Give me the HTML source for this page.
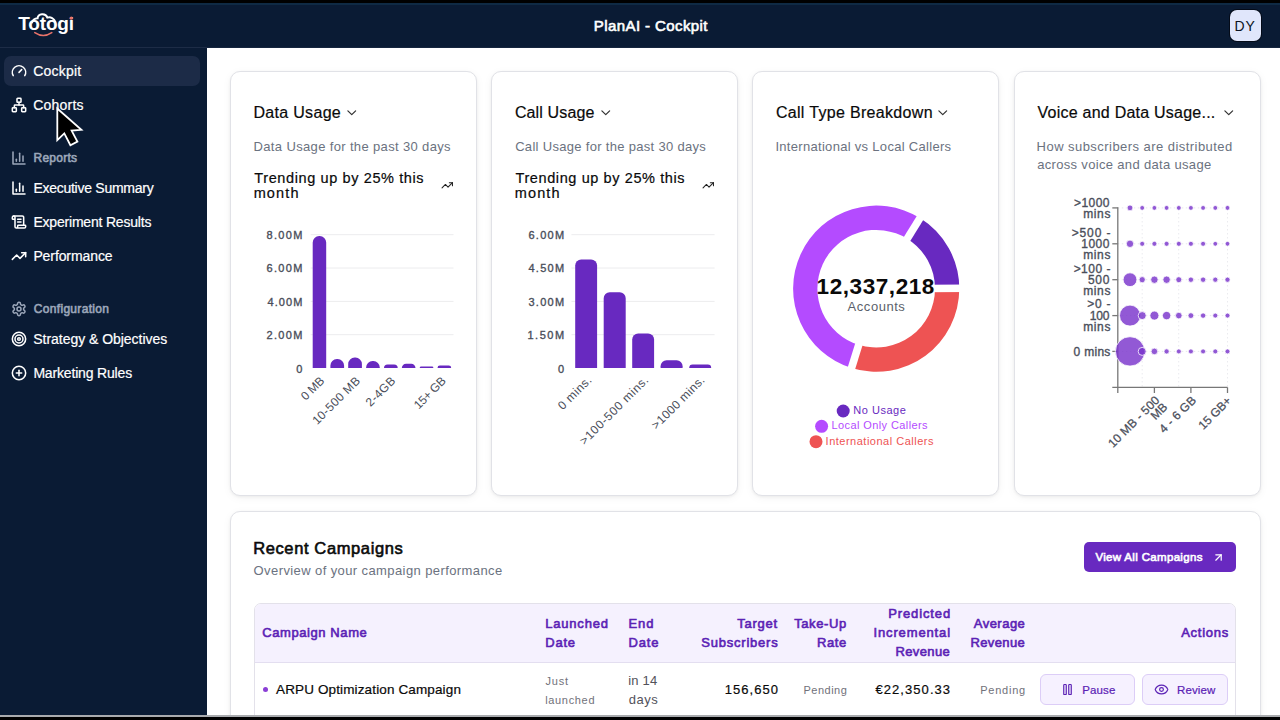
<!DOCTYPE html>
<html lang="en"><head><meta charset="utf-8"><title>PlanAI - Cockpit</title>
<style>
html,body{margin:0;padding:0;}
body{width:1280px;height:720px;overflow:hidden;position:relative;background:#fff;font-family:"Liberation Sans", sans-serif;}
.a{position:absolute;display:block;box-sizing:border-box;}
.t{position:absolute;white-space:nowrap;margin:0;}
svg text{font-family:"Liberation Sans", sans-serif;}
</style></head>
<body>
<div class="a" style="left:0px;top:0px;width:1280px;height:720px;background:#fff;"></div>
<div class="a" style="left:0px;top:0px;width:1280px;height:48px;background:#0a1b34;"></div>
<div class="a" style="left:0px;top:47px;width:1280px;height:1px;background:#16263f;"></div>
<div class="a" style="left:0px;top:48px;width:207px;height:672px;background:#0a1b34;"></div>
<div class="a" style="left:0px;top:47px;width:207px;height:1px;background:#1d2c46;"></div>
<div class="a" style="left:0px;top:0px;width:1280px;height:3px;background:#000;"></div>
<div class="a" style="left:0px;top:3px;width:1280px;height:2px;background:#0f2a44;"></div>
<header>
<div id="t1" class="t" style="top:12.00px;font-size:19px;line-height:23px;font-weight:700;color:#fff;letter-spacing:-0.168px;left:18.30px;">Totogi</div>
<svg class="a" style="left:10px;top:8px" width="80" height="36" viewBox="10 8 80 36" fill="none"><path d="M32 22.6 C32.8 19.4 35.2 18.3 37.6 18.2 C38 13.4 45.6 12.6 47.4 17.6 C50.4 16.6 54.4 18.4 55.3 22" stroke="#fff" stroke-width="2" stroke-linecap="round"/><path d="M34.8 32.7 Q43.3 38.4 51.8 32.7" stroke="#e8736a" stroke-width="1.6" stroke-linecap="round"/><circle cx="71.3" cy="18.2" r="1.6" fill="#e8736a"/></svg>
<div id="t2" class="t" style="top:16.00px;font-size:15px;line-height:19px;font-weight:400;color:#fff;-webkit-text-stroke:0.6px;letter-spacing:0.408px;left:593.82px;">PlanAI - Cockpit</div>
<div class="a" style="left:1230px;top:10px;width:31px;height:31px;background:#e0e6fb;border-radius:7px;box-shadow:0 0 0 1px #040b18;"></div>
<div id="t3" class="t" style="top:17.00px;font-size:14px;line-height:18px;font-weight:400;color:#0b1220;letter-spacing:0.710px;left:1234.59px;">DY</div>
</header>
<nav>
<div class="a" style="left:3.6px;top:56px;width:196px;height:30px;background:#1c2b47;border-radius:7px;"></div>
<svg class="a" style="left:11px;top:63.3px" width="16" height="16" viewBox="0 0 24 24" fill="none" stroke="#fff" stroke-width="2.3" stroke-linecap="round" stroke-linejoin="round"><path d="m12 14 4-4"/><path d="M3.34 19a10 10 0 1 1 17.32 0"/></svg>
<div id="t4" class="t" style="top:62.00px;font-size:14px;line-height:18px;font-weight:400;color:#fff;-webkit-text-stroke:0.2px;letter-spacing:0.177px;left:33.32px;">Cockpit</div>
<svg class="a" style="left:11px;top:97px" width="16" height="16" viewBox="0 0 24 24" fill="none" stroke="#fff" stroke-width="2.3" stroke-linecap="round" stroke-linejoin="round"><rect x="16" y="16" width="6" height="6" rx="1"/><rect x="2" y="16" width="6" height="6" rx="1"/><rect x="9" y="2" width="6" height="6" rx="1"/><path d="M5 16v-3a1 1 0 0 1 1-1h12a1 1 0 0 1 1 1v3"/><path d="M12 12V8"/></svg>
<div id="t5" class="t" style="top:96.00px;font-size:14px;line-height:18px;font-weight:400;color:#fff;-webkit-text-stroke:0.2px;letter-spacing:0.198px;left:33.32px;">Cohorts</div>
<svg class="a" style="left:11px;top:149.8px" width="16" height="16" viewBox="0 0 24 24" fill="none" stroke="#9ba6b9" stroke-width="2.3" stroke-linecap="round" stroke-linejoin="round"><path d="M3 3v18h18"/><path d="M18 17V9"/><path d="M13 17V5"/><path d="M8 17v-3"/></svg>
<div id="t6" class="t" style="top:150.00px;font-size:12px;line-height:16px;font-weight:400;color:#9ba6b9;-webkit-text-stroke:0.6px;letter-spacing:0.270px;left:33.48px;">Reports</div>
<svg class="a" style="left:11px;top:180px" width="16" height="16" viewBox="0 0 24 24" fill="none" stroke="#fff" stroke-width="2.3" stroke-linecap="round" stroke-linejoin="round"><path d="M3 3v18h18"/><path d="M18 17V9"/><path d="M13 17V5"/><path d="M8 17v-3"/></svg>
<div id="t7" class="t" style="top:179.00px;font-size:14px;line-height:18px;font-weight:400;color:#fff;-webkit-text-stroke:0.2px;letter-spacing:-0.261px;left:33.39px;">Executive Summary</div>
<svg class="a" style="left:11px;top:214px" width="16" height="16" viewBox="0 0 24 24" fill="none" stroke="#fff" stroke-width="2.3" stroke-linecap="round" stroke-linejoin="round"><path d="M15 12h-5"/><path d="M15 8h-5"/><path d="M19 17V5a2 2 0 0 0-2-2H4"/><path d="M8 21h12a2 2 0 0 0 2-2v-1a1 1 0 0 0-1-1H11a1 1 0 0 0-1 1v1a2 2 0 1 1-4 0V5a2 2 0 1 0-4 0v2a1 1 0 0 0 1 1h3"/></svg>
<div id="t8" class="t" style="top:213.00px;font-size:14px;line-height:18px;font-weight:400;color:#fff;-webkit-text-stroke:0.2px;letter-spacing:-0.196px;left:33.39px;">Experiment Results</div>
<svg class="a" style="left:11px;top:248px" width="16" height="16" viewBox="0 0 24 24" fill="none" stroke="#fff" stroke-width="2.3" stroke-linecap="round" stroke-linejoin="round"><polyline points="22 7 13.5 15.5 8.5 10.5 2 17"/><polyline points="16 7 22 7 22 13"/></svg>
<div id="t9" class="t" style="top:247.00px;font-size:14px;line-height:18px;font-weight:400;color:#fff;-webkit-text-stroke:0.2px;letter-spacing:-0.093px;left:33.39px;">Performance</div>
<svg class="a" style="left:11px;top:301.0px" width="16" height="16" viewBox="0 0 24 24" fill="none" stroke="#9ba6b9" stroke-width="2.3" stroke-linecap="round" stroke-linejoin="round"><path d="M12.22 2h-.44a2 2 0 0 0-2 2v.18a2 2 0 0 1-1 1.73l-.43.25a2 2 0 0 1-2 0l-.15-.08a2 2 0 0 0-2.73.73l-.22.38a2 2 0 0 0 .73 2.73l.15.1a2 2 0 0 1 1 1.72v.51a2 2 0 0 1-1 1.74l-.15.09a2 2 0 0 0-.73 2.73l.22.38a2 2 0 0 0 2.73.73l.15-.08a2 2 0 0 1 2 0l.43.25a2 2 0 0 1 1 1.73V20a2 2 0 0 0 2 2h.44a2 2 0 0 0 2-2v-.18a2 2 0 0 1 1-1.73l.43-.25a2 2 0 0 1 2 0l.15.08a2 2 0 0 0 2.73-.73l.22-.39a2 2 0 0 0-.73-2.73l-.15-.08a2 2 0 0 1-1-1.74v-.5a2 2 0 0 1 1-1.74l.15-.09a2 2 0 0 0 .73-2.73l-.22-.38a2 2 0 0 0-2.73-.73l-.15.08a2 2 0 0 1-2 0l-.43-.25a2 2 0 0 1-1-1.73V4a2 2 0 0 0-2-2z"/><circle cx="12" cy="12" r="3"/></svg>
<div id="t10" class="t" style="top:301.00px;font-size:12px;line-height:16px;font-weight:400;color:#9ba6b9;-webkit-text-stroke:0.6px;letter-spacing:0.314px;left:33.80px;">Configuration</div>
<svg class="a" style="left:11px;top:331.1px" width="16" height="16" viewBox="0 0 24 24" fill="none" stroke="#fff" stroke-width="2.3" stroke-linecap="round" stroke-linejoin="round"><circle cx="12" cy="12" r="10"/><circle cx="12" cy="12" r="6"/><circle cx="12" cy="12" r="2"/></svg>
<div id="t11" class="t" style="top:330.00px;font-size:14px;line-height:18px;font-weight:400;color:#fff;-webkit-text-stroke:0.2px;letter-spacing:-0.036px;left:33.30px;">Strategy &amp; Objectives</div>
<svg class="a" style="left:11px;top:365px" width="16" height="16" viewBox="0 0 24 24" fill="none" stroke="#fff" stroke-width="2.3" stroke-linecap="round" stroke-linejoin="round"><circle cx="12" cy="12" r="10"/><path d="M8 12h8"/><path d="M12 8v8"/></svg>
<div id="t12" class="t" style="top:364.00px;font-size:14px;line-height:18px;font-weight:400;color:#fff;-webkit-text-stroke:0.2px;letter-spacing:-0.171px;left:33.39px;">Marketing Rules</div>
</nav>
<main>
<section>
<div class="a" style="left:230px;top:71px;width:247px;height:425px;background:#fff;border:1px solid #e1e2e7;border-radius:10px;box-shadow:0 1px 3px rgba(0,0,0,.06),0 2px 10px rgba(0,0,0,.045);"></div>
<div class="a" style="left:491px;top:71px;width:247px;height:425px;background:#fff;border:1px solid #e1e2e7;border-radius:10px;box-shadow:0 1px 3px rgba(0,0,0,.06),0 2px 10px rgba(0,0,0,.045);"></div>
<div class="a" style="left:752px;top:71px;width:247px;height:425px;background:#fff;border:1px solid #e1e2e7;border-radius:10px;box-shadow:0 1px 3px rgba(0,0,0,.06),0 2px 10px rgba(0,0,0,.045);"></div>
<div class="a" style="left:1014px;top:71px;width:247px;height:425px;background:#fff;border:1px solid #e1e2e7;border-radius:10px;box-shadow:0 1px 3px rgba(0,0,0,.06),0 2px 10px rgba(0,0,0,.045);"></div>
<div id="t13" class="t" style="top:103.00px;font-size:16px;line-height:19px;font-weight:400;color:#0a0a0a;-webkit-text-stroke:0.2px;letter-spacing:0.320px;left:253.40px;">Data Usage</div>
<svg class="a" style="left:344.25px;top:105px" width="15.5" height="15.5" viewBox="0 0 24 24" fill="none" stroke="#333" stroke-width="1.9" stroke-linecap="round" stroke-linejoin="round"><path d="m6 9 6 6 6-6"/></svg>
<div id="t14" class="t" style="top:103.00px;font-size:16px;line-height:19px;font-weight:400;color:#0a0a0a;-webkit-text-stroke:0.2px;letter-spacing:0.144px;left:514.88px;">Call Usage</div>
<svg class="a" style="left:598.35px;top:105px" width="15.5" height="15.5" viewBox="0 0 24 24" fill="none" stroke="#333" stroke-width="1.9" stroke-linecap="round" stroke-linejoin="round"><path d="m6 9 6 6 6-6"/></svg>
<div id="t15" class="t" style="top:103.00px;font-size:16px;line-height:19px;font-weight:400;color:#0a0a0a;-webkit-text-stroke:0.2px;letter-spacing:0.321px;left:775.88px;">Call Type Breakdown</div>
<svg class="a" style="left:935.45px;top:105px" width="15.5" height="15.5" viewBox="0 0 24 24" fill="none" stroke="#333" stroke-width="1.9" stroke-linecap="round" stroke-linejoin="round"><path d="m6 9 6 6 6-6"/></svg>
<div id="t16" class="t" style="top:103.00px;font-size:16px;line-height:19px;font-weight:400;color:#0a0a0a;-webkit-text-stroke:0.2px;letter-spacing:0.234px;left:1037.58px;">Voice and Data Usage...</div>
<svg class="a" style="left:1221.45px;top:105px" width="15.5" height="15.5" viewBox="0 0 24 24" fill="none" stroke="#333" stroke-width="1.9" stroke-linecap="round" stroke-linejoin="round"><path d="m6 9 6 6 6-6"/></svg>
<div id="t17" class="t" style="top:138.00px;font-size:13px;line-height:17px;font-weight:400;color:#6b7280;letter-spacing:0.354px;left:253.55px;">Data Usage for the past 30 days</div>
<div id="t18" class="t" style="top:138.00px;font-size:13px;line-height:17px;font-weight:400;color:#6b7280;letter-spacing:0.310px;left:515.15px;">Call Usage for the past 30 days</div>
<div id="t19" class="t" style="top:138.00px;font-size:13px;line-height:17px;font-weight:400;color:#6b7280;letter-spacing:0.302px;left:775.42px;">International vs Local Callers</div>
<div id="t20" class="t" style="top:138.00px;font-size:13px;line-height:17px;font-weight:400;color:#6b7280;letter-spacing:0.452px;left:1036.62px;">How subscribers are distributed</div>
<div id="t21" class="t" style="top:156.00px;font-size:13px;line-height:17px;font-weight:400;color:#6b7280;letter-spacing:0.328px;left:1037.16px;">across voice and data usage</div>
<div id="t22" class="t" style="top:169.00px;font-size:14.5px;line-height:18px;font-weight:400;color:#0a0a0a;-webkit-text-stroke:0.2px;letter-spacing:0.613px;left:254.31px;">Trending up by 25% this</div>
<div id="t23" class="t" style="top:184.00px;font-size:14.5px;line-height:18px;font-weight:400;color:#0a0a0a;-webkit-text-stroke:0.2px;letter-spacing:1.124px;left:253.68px;">month</div>
<svg class="a" style="left:440.75px;top:179.25px" width="12.5" height="12.5" viewBox="0 0 24 24" fill="none" stroke="#222" stroke-width="2" stroke-linecap="round" stroke-linejoin="round"><polyline points="22 7 13.5 15.5 8.5 10.5 2 17"/><polyline points="16 7 22 7 22 13"/></svg>
<div id="t24" class="t" style="top:169.00px;font-size:14.5px;line-height:18px;font-weight:400;color:#0a0a0a;-webkit-text-stroke:0.2px;letter-spacing:0.605px;left:515.48px;">Trending up by 25% this</div>
<div id="t25" class="t" style="top:184.00px;font-size:14.5px;line-height:18px;font-weight:400;color:#0a0a0a;-webkit-text-stroke:0.2px;letter-spacing:1.078px;left:514.84px;">month</div>
<svg class="a" style="left:701.85px;top:179.25px" width="12.5" height="12.5" viewBox="0 0 24 24" fill="none" stroke="#222" stroke-width="2" stroke-linecap="round" stroke-linejoin="round"><polyline points="22 7 13.5 15.5 8.5 10.5 2 17"/><polyline points="16 7 22 7 22 13"/></svg>
<svg class="a" style="left:0;top:0" width="1280" height="720" viewBox="0 0 1280 720"><line x1="310.7" x2="453.5" y1="234.7" y2="234.7" stroke="#ececee" stroke-width="1"/><line x1="310.7" x2="453.5" y1="268" y2="268" stroke="#ececee" stroke-width="1"/><line x1="310.7" x2="453.5" y1="301.4" y2="301.4" stroke="#ececee" stroke-width="1"/><line x1="310.7" x2="453.5" y1="334.7" y2="334.7" stroke="#ececee" stroke-width="1"/><text id="s1" x="303.75" y="239.00" text-anchor="end" font-size="11" font-weight="400" fill="#4a4e5a" stroke="#4a4e5a" stroke-width="0.35" letter-spacing="1.350">8.00M</text><text id="s2" x="303.75" y="272.35" text-anchor="end" font-size="11" font-weight="400" fill="#4a4e5a" stroke="#4a4e5a" stroke-width="0.35" letter-spacing="1.350">6.00M</text><text id="s3" x="303.50" y="305.65" text-anchor="end" font-size="11" font-weight="400" fill="#4a4e5a" stroke="#4a4e5a" stroke-width="0.35" letter-spacing="1.100">4.00M</text><text id="s4" x="303.75" y="339.45" text-anchor="end" font-size="11" font-weight="400" fill="#4a4e5a" stroke="#4a4e5a" stroke-width="0.35" letter-spacing="1.350">2.00M</text><text id="s5" x="302.40" y="372.60" text-anchor="end" font-size="11" font-weight="400" fill="#4a4e5a" stroke="#4a4e5a" stroke-width="0.35">0</text><path d="M312.70 368 L312.70 242.50 A6.50 6.50 0 0 1 319.20 236.00 L319.70 236.00 A6.50 6.50 0 0 1 326.20 242.50 L326.20 368 Z" fill="#6829c0"/><path d="M330.40 368 L330.40 365.50 A6.50 6.50 0 0 1 336.90 359.00 L337.60 359.00 A6.50 6.50 0 0 1 344.10 365.50 L344.10 368 Z" fill="#6829c0"/><path d="M348.20 368 L348.20 364.00 A6.50 6.50 0 0 1 354.70 357.50 L355.40 357.50 A6.50 6.50 0 0 1 361.90 364.00 L361.90 368 Z" fill="#6829c0"/><path d="M366.10 368 L366.10 367.50 A6.50 6.50 0 0 1 372.60 361.00 L373.30 361.00 A6.50 6.50 0 0 1 379.80 367.50 L379.80 368 Z" fill="#6829c0"/><path d="M384.00 368 L384.00 368.00 A3.60 3.60 0 0 1 387.60 364.40 L394.10 364.40 A3.60 3.60 0 0 1 397.70 368.00 L397.70 368 Z" fill="#6829c0"/><path d="M401.80 368 L401.80 368.00 A4.30 4.30 0 0 1 406.10 363.70 L411.20 363.70 A4.30 4.30 0 0 1 415.50 368.00 L415.50 368 Z" fill="#6829c0"/><path d="M419.70 368 L419.70 368.00 A1.40 1.40 0 0 1 421.10 366.60 L432.00 366.60 A1.40 1.40 0 0 1 433.40 368.00 L433.40 368 Z" fill="#6829c0"/><path d="M437.50 368 L437.50 368.00 A2.40 2.40 0 0 1 439.90 365.60 L448.80 365.60 A2.40 2.40 0 0 1 451.20 368.00 L451.20 368 Z" fill="#6829c0"/><text id="s6" transform="translate(325.05,381.70) rotate(-45)" x="-0.24" text-anchor="end" font-size="12" font-weight="400" fill="#4a4e5a" letter-spacing="-0.237">0 MB</text><text id="s7" transform="translate(360.80,381.70) rotate(-45)" x="0.38" text-anchor="end" font-size="12" font-weight="400" fill="#4a4e5a" letter-spacing="0.381">10-500 MB</text><text id="s8" transform="translate(396.15,381.70) rotate(-45)" x="0.38" text-anchor="end" font-size="12" font-weight="400" fill="#4a4e5a" letter-spacing="0.384">2-4GB</text><text id="s9" transform="translate(446.65,381.70) rotate(-45)" x="-0.29" text-anchor="end" font-size="12" font-weight="400" fill="#4a4e5a" letter-spacing="-0.289">15+ GB</text><line x1="571.4" x2="714.6" y1="234.7" y2="234.7" stroke="#ececee" stroke-width="1"/><line x1="571.4" x2="714.6" y1="268" y2="268" stroke="#ececee" stroke-width="1"/><line x1="571.4" x2="714.6" y1="301.4" y2="301.4" stroke="#ececee" stroke-width="1"/><line x1="571.4" x2="714.6" y1="334.7" y2="334.7" stroke="#ececee" stroke-width="1"/><text id="s10" x="565.50" y="239.00" text-anchor="end" font-size="11" font-weight="400" fill="#4a4e5a" stroke="#4a4e5a" stroke-width="0.35" letter-spacing="1.300">6.00M</text><text id="s11" x="565.50" y="272.35" text-anchor="end" font-size="11" font-weight="400" fill="#4a4e5a" stroke="#4a4e5a" stroke-width="0.35" letter-spacing="1.300">4.50M</text><text id="s12" x="565.50" y="305.65" text-anchor="end" font-size="11" font-weight="400" fill="#4a4e5a" stroke="#4a4e5a" stroke-width="0.35" letter-spacing="1.300">3.00M</text><text id="s13" x="565.75" y="339.45" text-anchor="end" font-size="11" font-weight="400" fill="#4a4e5a" stroke="#4a4e5a" stroke-width="0.35" letter-spacing="1.550">1.50M</text><text id="s14" x="564.20" y="372.60" text-anchor="end" font-size="11" font-weight="400" fill="#4a4e5a" stroke="#4a4e5a" stroke-width="0.35">0</text><path d="M575.20 368 L575.20 265.40 A6.00 6.00 0 0 1 581.20 259.40 L591.10 259.40 A6.00 6.00 0 0 1 597.10 265.40 L597.10 368 Z" fill="#6829c0"/><path d="M603.70 368 L603.70 298.20 A6.00 6.00 0 0 1 609.70 292.20 L619.70 292.20 A6.00 6.00 0 0 1 625.70 298.20 L625.70 368 Z" fill="#6829c0"/><path d="M632.20 368 L632.20 339.40 A6.00 6.00 0 0 1 638.20 333.40 L648.10 333.40 A6.00 6.00 0 0 1 654.10 339.40 L654.10 368 Z" fill="#6829c0"/><path d="M660.60 368 L660.60 366.20 A6.00 6.00 0 0 1 666.60 360.20 L676.60 360.20 A6.00 6.00 0 0 1 682.60 366.20 L682.60 368 Z" fill="#6829c0"/><path d="M689.20 368 L689.20 368.00 A3.40 3.40 0 0 1 692.60 364.60 L707.80 364.60 A3.40 3.40 0 0 1 711.20 368.00 L711.20 368 Z" fill="#6829c0"/><text id="s15" transform="translate(592.25,381.00) rotate(-45)" x="0.50" text-anchor="end" font-size="12" font-weight="400" fill="#4a4e5a" letter-spacing="0.500">0 mins.</text><text id="s16" transform="translate(649.15,381.00) rotate(-45)" x="0.64" text-anchor="end" font-size="12" font-weight="400" fill="#4a4e5a" letter-spacing="0.640">&gt;100-500 mins.</text><text id="s17" transform="translate(705.40,381.00) rotate(-45)" x="0.37" text-anchor="end" font-size="12" font-weight="400" fill="#4a4e5a" letter-spacing="0.367">&gt;1000 mins.</text><path d="M959.30 288.70 A83.1 83.1 0 0 0 919.99 218.07 L907.19 238.73 A58.8 58.8 0 0 1 935.00 288.70 Z" fill="#6829c0"/><path d="M919.99 218.07 A83.1 83.1 0 1 0 851.49 368.04 L858.71 344.84 A58.8 58.8 0 1 1 907.19 238.73 Z" fill="#b44bff"/><path d="M851.49 368.04 A83.1 83.1 0 0 0 959.30 288.70 L935.00 288.70 A58.8 58.8 0 0 1 858.71 344.84 Z" fill="#ee5353"/><line x1="926.20" y1="288.44" x2="968.20" y2="288.22" stroke="#fff" stroke-width="7.6"/><line x1="902.55" y1="246.21" x2="924.68" y2="210.51" stroke="#fff" stroke-width="7.6"/><line x1="861.33" y1="336.44" x2="848.84" y2="376.54" stroke="#fff" stroke-width="7.6"/><circle cx="843.2" cy="411" r="6.5" fill="#6829c0"/><circle cx="821.6" cy="426.3" r="6.5" fill="#b44bff"/><circle cx="816" cy="441.7" r="6.5" fill="#ee5353"/><line x1="1117.8" x2="1227.5" y1="207.9" y2="207.9" stroke="#e6e6ea" stroke-width="1" stroke-dasharray="1.5 2.5"/><line x1="1117.8" x2="1227.5" y1="243.8" y2="243.8" stroke="#e6e6ea" stroke-width="1" stroke-dasharray="1.5 2.5"/><line x1="1117.8" x2="1227.5" y1="279.7" y2="279.7" stroke="#e6e6ea" stroke-width="1" stroke-dasharray="1.5 2.5"/><line x1="1117.8" x2="1227.5" y1="315.6" y2="315.6" stroke="#e6e6ea" stroke-width="1" stroke-dasharray="1.5 2.5"/><line x1="1117.8" x2="1227.5" y1="351.4" y2="351.4" stroke="#e6e6ea" stroke-width="1" stroke-dasharray="1.5 2.5"/><line x1="1142.2" x2="1142.2" y1="205" y2="387.4" stroke="#ebebef" stroke-width="1" stroke-dasharray="1.5 2.5"/><line x1="1178.7" x2="1178.7" y1="205" y2="387.4" stroke="#ebebef" stroke-width="1" stroke-dasharray="1.5 2.5"/><line x1="1227.5" x2="1227.5" y1="205" y2="387.4" stroke="#ebebef" stroke-width="1" stroke-dasharray="1.5 2.5"/><line x1="1117.8" x2="1117.8" y1="207.3" y2="393" stroke="#777" stroke-width="1.3"/><line x1="1112.3" x2="1227.5" y1="387.4" y2="387.4" stroke="#777" stroke-width="1.3"/><line x1="1112.3" x2="1117.8" y1="207.9" y2="207.9" stroke="#777" stroke-width="1.3"/><line x1="1112.3" x2="1117.8" y1="243.8" y2="243.8" stroke="#777" stroke-width="1.3"/><line x1="1112.3" x2="1117.8" y1="279.7" y2="279.7" stroke="#777" stroke-width="1.3"/><line x1="1112.3" x2="1117.8" y1="315.6" y2="315.6" stroke="#777" stroke-width="1.3"/><line x1="1112.3" x2="1117.8" y1="351.4" y2="351.4" stroke="#777" stroke-width="1.3"/><line x1="1154.4" x2="1154.4" y1="387.4" y2="393" stroke="#777" stroke-width="1.3"/><line x1="1190.9" x2="1190.9" y1="387.4" y2="393" stroke="#777" stroke-width="1.3"/><line x1="1227.5" x2="1227.5" y1="387.4" y2="393" stroke="#777" stroke-width="1.3"/><circle cx="1130.0" cy="207.9" r="2.9" fill="#7a35cc" fill-opacity="0.82" stroke="#fff" stroke-width="0.8"/><circle cx="1142.2" cy="207.9" r="2.4" fill="#7a35cc" fill-opacity="0.82" stroke="#fff" stroke-width="0.8"/><circle cx="1154.4" cy="207.9" r="2.4" fill="#7a35cc" fill-opacity="0.82" stroke="#fff" stroke-width="0.8"/><circle cx="1166.6" cy="207.9" r="2.4" fill="#7a35cc" fill-opacity="0.82" stroke="#fff" stroke-width="0.8"/><circle cx="1178.8" cy="207.9" r="2.4" fill="#7a35cc" fill-opacity="0.82" stroke="#fff" stroke-width="0.8"/><circle cx="1190.9" cy="207.9" r="2.4" fill="#7a35cc" fill-opacity="0.82" stroke="#fff" stroke-width="0.8"/><circle cx="1203.1" cy="207.9" r="2.4" fill="#7a35cc" fill-opacity="0.82" stroke="#fff" stroke-width="0.8"/><circle cx="1215.3" cy="207.9" r="2.4" fill="#7a35cc" fill-opacity="0.82" stroke="#fff" stroke-width="0.8"/><circle cx="1227.5" cy="207.9" r="2.4" fill="#7a35cc" fill-opacity="0.82" stroke="#fff" stroke-width="0.8"/><circle cx="1130.0" cy="243.8" r="3.7" fill="#7a35cc" fill-opacity="0.82" stroke="#fff" stroke-width="0.8"/><circle cx="1142.2" cy="243.8" r="2.5" fill="#7a35cc" fill-opacity="0.82" stroke="#fff" stroke-width="0.8"/><circle cx="1154.4" cy="243.8" r="2.5" fill="#7a35cc" fill-opacity="0.82" stroke="#fff" stroke-width="0.8"/><circle cx="1166.6" cy="243.8" r="2.5" fill="#7a35cc" fill-opacity="0.82" stroke="#fff" stroke-width="0.8"/><circle cx="1178.8" cy="243.8" r="2.5" fill="#7a35cc" fill-opacity="0.82" stroke="#fff" stroke-width="0.8"/><circle cx="1190.9" cy="243.8" r="2.5" fill="#7a35cc" fill-opacity="0.82" stroke="#fff" stroke-width="0.8"/><circle cx="1203.1" cy="243.8" r="2.5" fill="#7a35cc" fill-opacity="0.82" stroke="#fff" stroke-width="0.8"/><circle cx="1215.3" cy="243.8" r="2.4" fill="#7a35cc" fill-opacity="0.82" stroke="#fff" stroke-width="0.8"/><circle cx="1227.5" cy="243.8" r="2.4" fill="#7a35cc" fill-opacity="0.82" stroke="#fff" stroke-width="0.8"/><circle cx="1130.0" cy="279.7" r="6.9" fill="#7a35cc" fill-opacity="0.82" stroke="#fff" stroke-width="0.8"/><circle cx="1142.2" cy="279.7" r="3.1" fill="#7a35cc" fill-opacity="0.82" stroke="#fff" stroke-width="0.8"/><circle cx="1154.4" cy="279.7" r="3.7" fill="#7a35cc" fill-opacity="0.82" stroke="#fff" stroke-width="0.8"/><circle cx="1166.6" cy="279.7" r="3.7" fill="#7a35cc" fill-opacity="0.82" stroke="#fff" stroke-width="0.8"/><circle cx="1178.8" cy="279.7" r="3.0" fill="#7a35cc" fill-opacity="0.82" stroke="#fff" stroke-width="0.8"/><circle cx="1190.9" cy="279.7" r="2.7" fill="#7a35cc" fill-opacity="0.82" stroke="#fff" stroke-width="0.8"/><circle cx="1203.1" cy="279.7" r="2.7" fill="#7a35cc" fill-opacity="0.82" stroke="#fff" stroke-width="0.8"/><circle cx="1215.3" cy="279.7" r="2.6" fill="#7a35cc" fill-opacity="0.82" stroke="#fff" stroke-width="0.8"/><circle cx="1227.5" cy="279.7" r="2.6" fill="#7a35cc" fill-opacity="0.82" stroke="#fff" stroke-width="0.8"/><circle cx="1130.0" cy="315.6" r="10.5" fill="#7a35cc" fill-opacity="0.82" stroke="#fff" stroke-width="0.8"/><circle cx="1142.2" cy="315.6" r="4.0" fill="#7a35cc" fill-opacity="0.82" stroke="#fff" stroke-width="0.8"/><circle cx="1154.4" cy="315.6" r="4.5" fill="#7a35cc" fill-opacity="0.82" stroke="#fff" stroke-width="0.8"/><circle cx="1166.6" cy="315.6" r="4.2" fill="#7a35cc" fill-opacity="0.82" stroke="#fff" stroke-width="0.8"/><circle cx="1178.8" cy="315.6" r="3.3" fill="#7a35cc" fill-opacity="0.82" stroke="#fff" stroke-width="0.8"/><circle cx="1190.9" cy="315.6" r="2.9" fill="#7a35cc" fill-opacity="0.82" stroke="#fff" stroke-width="0.8"/><circle cx="1203.1" cy="315.6" r="2.7" fill="#7a35cc" fill-opacity="0.82" stroke="#fff" stroke-width="0.8"/><circle cx="1215.3" cy="315.6" r="2.5" fill="#7a35cc" fill-opacity="0.82" stroke="#fff" stroke-width="0.8"/><circle cx="1227.5" cy="315.6" r="2.5" fill="#7a35cc" fill-opacity="0.82" stroke="#fff" stroke-width="0.8"/><circle cx="1130.0" cy="351.4" r="14.7" fill="#7a35cc" fill-opacity="0.82" stroke="#fff" stroke-width="0.8"/><circle cx="1142.2" cy="351.4" r="4.0" fill="#7a35cc" fill-opacity="0.82" stroke="#fff" stroke-width="0.8"/><circle cx="1154.4" cy="351.4" r="3.3" fill="#7a35cc" fill-opacity="0.82" stroke="#fff" stroke-width="0.8"/><circle cx="1166.6" cy="351.4" r="2.6" fill="#7a35cc" fill-opacity="0.82" stroke="#fff" stroke-width="0.8"/><circle cx="1178.8" cy="351.4" r="2.5" fill="#7a35cc" fill-opacity="0.82" stroke="#fff" stroke-width="0.8"/><circle cx="1190.9" cy="351.4" r="2.5" fill="#7a35cc" fill-opacity="0.82" stroke="#fff" stroke-width="0.8"/><circle cx="1203.1" cy="351.4" r="2.5" fill="#7a35cc" fill-opacity="0.82" stroke="#fff" stroke-width="0.8"/><circle cx="1215.3" cy="351.4" r="2.5" fill="#7a35cc" fill-opacity="0.82" stroke="#fff" stroke-width="0.8"/><circle cx="1227.5" cy="351.4" r="2.5" fill="#7a35cc" fill-opacity="0.82" stroke="#fff" stroke-width="0.8"/><text id="s18" x="1109.80" y="206.55" text-anchor="end" font-size="12" font-weight="400" fill="#4a4e5a" stroke="#4a4e5a" stroke-width="0.35" letter-spacing="0.400">&gt;1000</text><text id="s19" x="1110.99" y="217.65" text-anchor="end" font-size="12" font-weight="400" fill="#4a4e5a" stroke="#4a4e5a" stroke-width="0.35" letter-spacing="0.595">mins</text><text id="s20" x="1111.26" y="236.60" text-anchor="end" font-size="12" font-weight="400" fill="#4a4e5a" stroke="#4a4e5a" stroke-width="0.35" letter-spacing="0.860">&gt;500 -</text><text id="s21" x="1109.87" y="247.70" text-anchor="end" font-size="12" font-weight="400" fill="#4a4e5a" stroke="#4a4e5a" stroke-width="0.35" letter-spacing="0.466">1000</text><text id="s22" x="1110.99" y="258.80" text-anchor="end" font-size="12" font-weight="400" fill="#4a4e5a" stroke="#4a4e5a" stroke-width="0.35" letter-spacing="0.595">mins</text><text id="s23" x="1110.88" y="272.50" text-anchor="end" font-size="12" font-weight="400" fill="#4a4e5a" stroke="#4a4e5a" stroke-width="0.35" letter-spacing="0.480">&gt;100 -</text><text id="s24" x="1110.10" y="283.60" text-anchor="end" font-size="12" font-weight="400" fill="#4a4e5a" stroke="#4a4e5a" stroke-width="0.35" letter-spacing="0.700">500</text><text id="s25" x="1110.99" y="294.70" text-anchor="end" font-size="12" font-weight="400" fill="#4a4e5a" stroke="#4a4e5a" stroke-width="0.35" letter-spacing="0.595">mins</text><text id="s26" x="1111.14" y="308.40" text-anchor="end" font-size="12" font-weight="400" fill="#4a4e5a" stroke="#4a4e5a" stroke-width="0.35" letter-spacing="0.738">&gt;0 -</text><text id="s27" x="1109.20" y="319.50" text-anchor="end" font-size="12" font-weight="400" fill="#4a4e5a" stroke="#4a4e5a" stroke-width="0.35" letter-spacing="-0.200">100</text><text id="s28" x="1110.99" y="330.60" text-anchor="end" font-size="12" font-weight="400" fill="#4a4e5a" stroke="#4a4e5a" stroke-width="0.35" letter-spacing="0.595">mins</text><text id="s29" x="1110.70" y="355.60" text-anchor="end" font-size="12" font-weight="400" fill="#4a4e5a" stroke="#4a4e5a" stroke-width="0.35" letter-spacing="0.300">0 mins</text><text id="s30" transform="translate(1160.25,401.00) rotate(-45)" x="0.16" text-anchor="end" font-size="12" font-weight="400" fill="#4a4e5a" stroke="#4a4e5a" stroke-width="0.25" letter-spacing="0.159">10 MB - 500</text><text id="s31" transform="translate(1168.25,407.75) rotate(-45)" x="-0.03" text-anchor="end" font-size="12" font-weight="400" fill="#4a4e5a" stroke="#4a4e5a" stroke-width="0.25" letter-spacing="-0.034">MB</text><text id="s32" transform="translate(1196.80,401.00) rotate(-45)" x="0.23" text-anchor="end" font-size="12" font-weight="400" fill="#4a4e5a" stroke="#4a4e5a" stroke-width="0.25" letter-spacing="0.235">4 - 6 GB</text><text id="s33" transform="translate(1232.00,401.50) rotate(-45)" x="-0.07" text-anchor="end" font-size="12" font-weight="400" fill="#4a4e5a" stroke="#4a4e5a" stroke-width="0.25" letter-spacing="-0.071">15 GB+</text></svg>
<div id="t26" class="t" style="top:273.00px;font-size:22.5px;line-height:27px;font-weight:700;color:#0a0a0a;letter-spacing:0.574px;left:575.76px;width:600px;text-align:center;">12,337,218</div>
<div id="t27" class="t" style="top:298.00px;font-size:13px;line-height:17px;font-weight:400;color:#5b5f6b;letter-spacing:0.540px;left:576.53px;width:600px;text-align:center;">Accounts</div>
<div id="t28" class="t" style="top:403.00px;font-size:11px;line-height:14px;font-weight:400;color:#6829c0;letter-spacing:0.517px;left:853.35px;">No Usage</div>
<div id="t29" class="t" style="top:418.00px;font-size:11px;line-height:14px;font-weight:400;color:#b44bff;letter-spacing:0.398px;left:831.54px;">Local Only Callers</div>
<div id="t30" class="t" style="top:434.00px;font-size:11px;line-height:14px;font-weight:400;color:#ee5353;letter-spacing:0.501px;left:825.58px;">International Callers</div>
</section>
<section>
<div class="a" style="left:230px;top:511px;width:1031px;height:230px;background:#fff;border:1px solid #e1e2e7;border-radius:10px;box-shadow:0 1px 3px rgba(0,0,0,.06),0 2px 10px rgba(0,0,0,.045);"></div>
<div id="t31" class="t" style="top:538.00px;font-size:16.5px;line-height:20px;font-weight:400;color:#0a0a0a;-webkit-text-stroke:0.6px;letter-spacing:0.619px;left:253.16px;">Recent Campaigns</div>
<div id="t32" class="t" style="top:562.00px;font-size:13px;line-height:17px;font-weight:400;color:#6b7280;letter-spacing:0.403px;left:253.60px;">Overview of your campaign performance</div>
<div class="a" style="left:1084px;top:542px;width:152px;height:30px;background:#6829c0;border-radius:5px;"></div>
<div id="t33" class="t" style="top:550.00px;font-size:11.5px;line-height:14px;font-weight:400;color:#fff;-webkit-text-stroke:0.6px;letter-spacing:0.330px;left:1095.41px;">View All Campaigns</div>
<svg class="a" style="left:1211.5px;top:550.7px" width="13" height="13" viewBox="0 0 24 24" fill="none" stroke="#fff" stroke-width="2.2" stroke-linecap="round" stroke-linejoin="round"><path d="M7 7h10v10"/><path d="M7 17 17 7"/></svg>
<div class="a" style="left:254px;top:603px;width:982px;height:140px;background:#fff;border:1px solid #e3e1ea;border-radius:7px;overflow:hidden;"></div>
<div class="a" style="left:255px;top:604px;width:980px;height:58px;background:#f5f1fe;border-radius:6px 6px 0 0;"></div>
<div class="a" style="left:255px;top:662px;width:980px;height:1px;background:#e3def0;"></div>
<div id="t34" class="t" style="top:624.00px;font-size:13px;line-height:17px;font-weight:400;color:#5b22b5;-webkit-text-stroke:0.6px;letter-spacing:0.590px;left:262.20px;">Campaign Name</div>
<div id="t35" class="t" style="top:615.00px;font-size:13px;line-height:17px;font-weight:400;color:#5b22b5;-webkit-text-stroke:0.6px;letter-spacing:0.807px;left:545.19px;">Launched</div>
<div id="t36" class="t" style="top:634.00px;font-size:13px;line-height:17px;font-weight:400;color:#5b22b5;-webkit-text-stroke:0.6px;letter-spacing:0.808px;left:545.19px;">Date</div>
<div id="t37" class="t" style="top:615.00px;font-size:13px;line-height:17px;font-weight:400;color:#5b22b5;-webkit-text-stroke:0.6px;letter-spacing:0.889px;left:628.47px;">End</div>
<div id="t38" class="t" style="top:634.00px;font-size:13px;line-height:17px;font-weight:400;color:#5b22b5;-webkit-text-stroke:0.6px;letter-spacing:0.838px;left:628.47px;">Date</div>
<div id="t39" class="t" style="top:615.00px;font-size:13px;line-height:17px;font-weight:400;color:#5b22b5;-webkit-text-stroke:0.6px;letter-spacing:0.766px;right:502.00px;">Target</div>
<div id="t40" class="t" style="top:634.00px;font-size:13px;line-height:17px;font-weight:400;color:#5b22b5;-webkit-text-stroke:0.6px;letter-spacing:0.788px;right:501.47px;">Subscribers</div>
<div id="t41" class="t" style="top:615.00px;font-size:13px;line-height:17px;font-weight:400;color:#5b22b5;-webkit-text-stroke:0.6px;letter-spacing:0.610px;right:433.19px;">Take-Up</div>
<div id="t42" class="t" style="top:634.00px;font-size:13px;line-height:17px;font-weight:400;color:#5b22b5;-webkit-text-stroke:0.6px;letter-spacing:0.616px;right:433.10px;">Rate</div>
<div id="t43" class="t" style="top:605.00px;font-size:13px;line-height:17px;font-weight:400;color:#5b22b5;-webkit-text-stroke:0.6px;letter-spacing:0.881px;right:328.99px;">Predicted</div>
<div id="t44" class="t" style="top:624.00px;font-size:13px;line-height:17px;font-weight:400;color:#5b22b5;-webkit-text-stroke:0.6px;letter-spacing:0.873px;right:329.04px;">Incremental</div>
<div id="t45" class="t" style="top:643.00px;font-size:13px;line-height:17px;font-weight:400;color:#5b22b5;-webkit-text-stroke:0.6px;letter-spacing:0.393px;right:329.82px;">Revenue</div>
<div id="t46" class="t" style="top:615.00px;font-size:13px;line-height:17px;font-weight:400;color:#5b22b5;-webkit-text-stroke:0.6px;letter-spacing:0.494px;right:254.65px;">Average</div>
<div id="t47" class="t" style="top:634.00px;font-size:13px;line-height:17px;font-weight:400;color:#5b22b5;-webkit-text-stroke:0.6px;letter-spacing:0.393px;right:254.82px;">Revenue</div>
<div id="t48" class="t" style="top:624.00px;font-size:13px;line-height:17px;font-weight:400;color:#5b22b5;-webkit-text-stroke:0.6px;letter-spacing:0.744px;right:51.00px;">Actions</div>
<div class="a" style="left:262.6px;top:686.6px;width:5.4px;height:5.4px;background:#8b3fd6;border-radius:50%;"></div>
<div id="t49" class="t" style="top:681.00px;font-size:13.5px;line-height:17px;font-weight:400;color:#0a0a0a;-webkit-text-stroke:0.2px;letter-spacing:0.132px;left:276.02px;">ARPU Optimization Campaign</div>
<div id="t50" class="t" style="top:674.00px;font-size:11px;line-height:14px;font-weight:400;color:#71717a;letter-spacing:0.744px;left:545.61px;">Just</div>
<div id="t51" class="t" style="top:693.00px;font-size:11px;line-height:14px;font-weight:400;color:#71717a;letter-spacing:0.676px;left:545.14px;">launched</div>
<div id="t52" class="t" style="top:672.00px;font-size:13px;line-height:17px;font-weight:400;color:#52525b;letter-spacing:0.187px;left:628.27px;">in 14</div>
<div id="t53" class="t" style="top:691.00px;font-size:13px;line-height:17px;font-weight:400;color:#52525b;letter-spacing:0.520px;left:628.65px;">days</div>
<div id="t54" class="t" style="top:681.00px;font-size:13px;line-height:17px;font-weight:400;color:#0a0a0a;-webkit-text-stroke:0.2px;letter-spacing:1.043px;right:500.92px;">156,650</div>
<div id="t55" class="t" style="top:683.00px;font-size:11px;line-height:14px;font-weight:400;color:#71717a;letter-spacing:0.482px;right:432.72px;">Pending</div>
<div id="t56" class="t" style="top:681.00px;font-size:13px;line-height:17px;font-weight:400;color:#0a0a0a;-webkit-text-stroke:0.2px;letter-spacing:1.058px;right:328.87px;">€22,350.33</div>
<div id="t57" class="t" style="top:683.00px;font-size:11px;line-height:14px;font-weight:400;color:#71717a;letter-spacing:0.768px;right:254.02px;">Pending</div>
<div class="a" style="left:1040px;top:674px;width:94.5px;height:30.5px;background:#f6f1ff;border:1px solid #dccdf7;border-radius:6px;"></div>
<svg class="a" style="left:1059.75px;top:681.75px" width="15" height="15" viewBox="0 0 24 24" fill="none" stroke="#5b22b5" stroke-width="1.9" stroke-linecap="round" stroke-linejoin="round"><rect x="14" y="4" width="4" height="16" rx="1"/><rect x="6" y="4" width="4" height="16" rx="1"/></svg>
<div id="t58" class="t" style="top:683.00px;font-size:11.5px;line-height:14px;font-weight:400;color:#5b22b5;-webkit-text-stroke:0.2px;letter-spacing:0.135px;left:1082.14px;">Pause</div>
<div class="a" style="left:1142px;top:674px;width:86px;height:30.5px;background:#f6f1ff;border:1px solid #dccdf7;border-radius:6px;"></div>
<svg class="a" style="left:1154.4px;top:682.0px" width="15" height="15" viewBox="0 0 24 24" fill="none" stroke="#5b22b5" stroke-width="1.9" stroke-linecap="round" stroke-linejoin="round"><path d="M2.062 12.348a1 1 0 0 1 0-.696 10.75 10.75 0 0 1 19.876 0 1 1 0 0 1 0 .696 10.75 10.75 0 0 1-19.876 0"/><circle cx="12" cy="12" r="3"/></svg>
<div id="t59" class="t" style="top:683.00px;font-size:11.5px;line-height:14px;font-weight:400;color:#5b22b5;-webkit-text-stroke:0.2px;letter-spacing:0.099px;left:1176.99px;">Review</div>
</section>
</main>
<div class="a" style="left:0px;top:715.4px;width:1280px;height:1.6px;background:#a9abae;"></div>
<div class="a" style="left:0px;top:717px;width:1280px;height:3px;background:#000;"></div>
<svg class="a" style="left:50px;top:100px" width="40" height="52" viewBox="50 100 40 52"><polygon points="57.3,108.6 57.3,140.2 64.3,133.4 70.4,145.2 77.4,141.6 71.6,130.6 81.4,129.8" fill="#000" stroke="#fff" stroke-width="1.8" stroke-linejoin="miter"/></svg>
</body></html>
